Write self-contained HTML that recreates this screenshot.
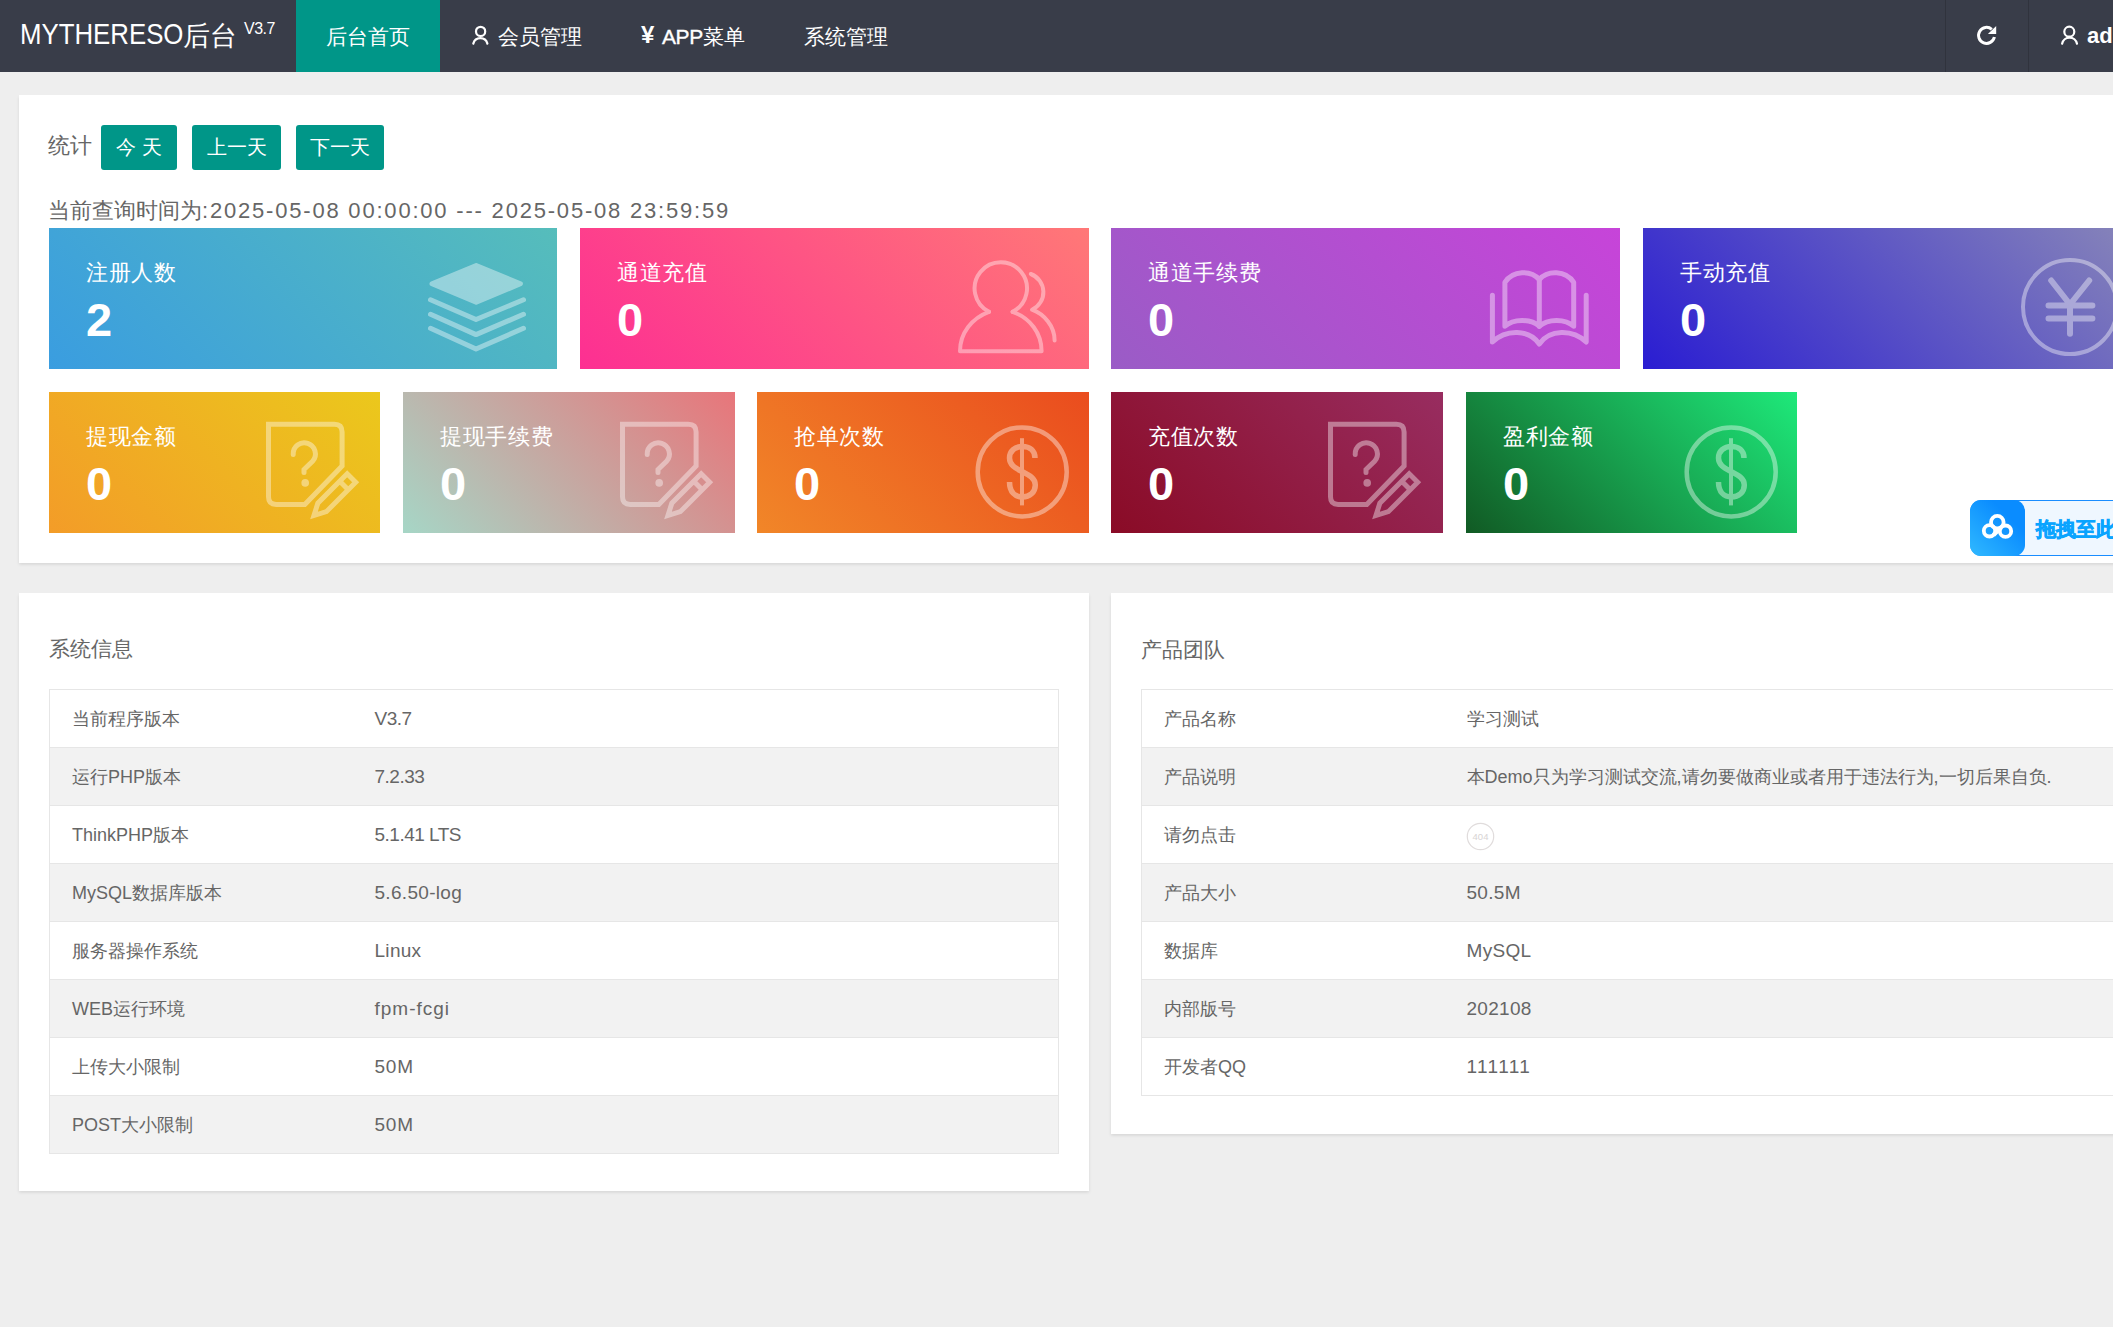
<!DOCTYPE html>
<html><head><meta charset="utf-8">
<style>
*{margin:0;padding:0;box-sizing:border-box}
html,body{width:2113px;height:1327px;overflow:hidden;background:#eeeeee;font-family:"Liberation Sans",sans-serif;color:#666}
.abs{position:absolute}
#hdr{position:absolute;left:0;top:0;width:2113px;height:72px;background:#393d49}
.nav{position:absolute;top:1px;height:72px;line-height:72px;color:#fff;font-size:21px;white-space:nowrap}
.sep{position:absolute;top:0;width:1px;height:72px;background:#30333d}
.panel{position:absolute;background:#fff;box-shadow:0 1.5px 3px rgba(0,0,0,.1)}
.btn{position:absolute;top:125px;height:45px;line-height:45px;background:#009688;color:#fff;border-radius:3px;font-size:19.5px;text-align:center;white-space:nowrap}
.card{position:absolute;color:#fff;overflow:hidden}
.card .lb{position:absolute;left:37px;top:30px;font-size:22px;letter-spacing:.7px;font-weight:500;line-height:30px;white-space:nowrap}
.card .num{position:absolute;left:37px;top:67px;font-size:47px;line-height:50px;font-weight:bold}
.card svg{position:absolute;left:0;top:0}
table{border-collapse:collapse;position:absolute;font-size:18px;color:#666}
td{height:58px;border-top:1px solid #e6e6e6;border-bottom:1px solid #e6e6e6;padding:0 0 0 22px;white-space:nowrap}
tr:nth-child(even) td{background:#f2f2f2}
.v{font-size:19px;letter-spacing:.3px;position:relative;top:0}
.vd{letter-spacing:-.5px}
</style></head><body>
<div id="hdr">
  <div class="nav" style="left:20px;font-size:30px;line-height:72px;top:-2px"><span id="lg" style="display:inline-block;transform:scaleX(.86);transform-origin:0 50%">MYTHERESO</span></div>
  <div class="nav" style="left:183px;font-size:27px;line-height:72px;top:0px">后台</div>
  <div class="nav" style="left:244px;font-size:16px;line-height:20px;top:19px;letter-spacing:-.5px">V3.7</div>
  <div class="abs" style="left:296px;top:0;width:144px;height:72px;background:#009688"></div><div class="nav" style="left:296px;width:144px;text-align:center">后台首页</div>
  <div class="nav" style="left:498px">会员管理</div>
  <svg class="abs" style="left:0;top:0" width="2113" height="72" viewBox="0 0 2113 72" fill="none" stroke="#fff" stroke-width="2.2" stroke-linecap="round">
   <circle cx="480.6" cy="31.4" r="4.6"/>
   <path d="M473.3,43.6 A7.3,7.3 0 0 1 487.4,43.6"/>
   <circle cx="2069.3" cy="31.7" r="5"/>
   <path d="M2062.1,43.7 A7.6,7.6 0 0 1 2077,43.7"/>
   <path stroke-width="3" stroke-linecap="butt" d="M1994.4,37 A8,8 0 1 1 1991.8,29.3"/>
   <path fill="#fff" stroke="none" d="M1987.9,33.9 L1996.2,25.9 L1996.2,33.9 Z"/>
  </svg>
  <div class="nav" style="left:641px;font-weight:bold;font-size:24px;top:-1px">¥</div><div class="nav" style="left:662px"><span style="letter-spacing:-.4px;-webkit-text-stroke:.35px #fff">APP</span>菜单</div>
  <div class="nav" style="left:804px">系统管理</div>
  <div class="sep" style="left:1945px"></div>
  <div class="sep" style="left:2028px"></div>
  <div class="nav" style="left:2087px;font-size:22px;font-weight:bold;top:0px">admin</div>
</div>

<div class="panel" style="left:19px;top:95px;width:2181px;height:468px">
</div>
<div class="abs" style="left:48px;top:128px;font-size:22px;line-height:36px;color:#666">统计</div>
<div class="btn" style="left:101px;width:76px">今 天</div>
<div class="btn" style="left:192px;width:89px">上一天</div>
<div class="btn" style="left:296px;width:88px">下一天</div>
<div class="abs" style="left:48px;top:196px;font-size:22px;line-height:30px;color:#666;white-space:nowrap">当前查询时间为<span style="letter-spacing:1.8px">:2025-05-08 00:00:00 --- 2025-05-08 23:59:59</span></div>

<div class="card" style="left:49px;top:228px;width:508px;height:141px;background:linear-gradient(45deg,#3a9de0,#56bdbb)"><div class="lb">注册人数</div><div class="num">2</div></div>
<div class="card" style="left:580px;top:228px;width:509px;height:141px;background:linear-gradient(45deg,#fd2f92,#ff7877)"><div class="lb">通道充值</div><div class="num">0</div></div>
<div class="card" style="left:1111px;top:228px;width:509px;height:141px;background:linear-gradient(45deg,#9a5cc6,#c744d9)"><div class="lb">通道手续费</div><div class="num">0</div></div>
<div class="card" style="left:1643px;top:228px;width:509px;height:141px;background:linear-gradient(45deg,#2a1dd2,#8a88b8)"><div class="lb">手动充值</div><div class="num">0</div></div>

<div class="card" style="left:49px;top:392px;width:331px;height:141px;background:linear-gradient(45deg,#f39c28,#ebc81c)"><div class="lb">提现金额</div><div class="num">0</div></div>
<div class="card" style="left:403px;top:392px;width:332px;height:141px;background:linear-gradient(45deg,#a6d6c6,#e8757a)"><div class="lb">提现手续费</div><div class="num">0</div></div>
<div class="card" style="left:757px;top:392px;width:332px;height:141px;background:linear-gradient(45deg,#f18628,#ea4c1e)"><div class="lb">抢单次数</div><div class="num">0</div></div>
<div class="card" style="left:1111px;top:392px;width:332px;height:141px;background:linear-gradient(45deg,#8a0b26,#982d60)"><div class="lb">充值次数</div><div class="num">0</div></div>
<div class="card" style="left:1466px;top:392px;width:331px;height:141px;background:linear-gradient(45deg,#115a24,#1ee97a)"><div class="lb">盈利金额</div><div class="num">0</div></div>


<svg class="abs" style="left:0;top:0" width="2113" height="1327" viewBox="0 0 2113 1327">
<defs>
<g id="iq" fill="none" stroke="#fff" stroke-width="5" stroke-linejoin="miter">
 <path d="M293.1,74 L293.1,40 Q293.1,32.3 285.4,32.3 L219.5,32.3 L219.5,104.7 Q219.5,112.4 227.2,112.4 L255.8,112.4 Z"/>
 <path stroke-linecap="round" d="M244.2,62.5 A11.1,11.1 0 1 1 263.8,69 L255,77.5 L255,80.5"/>
 <circle cx="256.2" cy="90.9" r="3.8" fill="#fff" stroke="none"/>
 <g transform="translate(304.2,84.3) rotate(45)">
  <path d="M-6,2.5 L6,2.5 L6,44 L0,55.5 L-6,44 Z M-6,13 L6,13"/>
 </g>
</g>
<g id="id" fill="none" stroke="#fff">
 <circle cx="265.2" cy="79.9" r="44.5" stroke-width="4.5"/>
 <path stroke-width="4" d="M265,46.2 L265,113.4"/>
 <path stroke-width="5.5" d="M278,66 C278,58.5 272.5,54.5 265.5,54.5 C258,54.5 252.5,59 252.5,66 C252.5,73 258,76 265,79.5 C272,83 278.3,86 278.3,93 C278.3,100.5 272.5,105 265.5,105 C258,105 252.5,100 252.5,90"/>
</g>
</defs>
<g opacity=".4" transform="translate(49,228)" fill="#fff" stroke="#fff" stroke-width="5" stroke-linecap="round" stroke-linejoin="round">
 <polygon points="383,55.8 427.2,37.5 471.4,55.8 427.2,74.3"/>
 <polyline fill="none" points="381.5,71.8 427,91.5 474.5,71.8"/>
 <polyline fill="none" points="381.5,86.3 427,106.6 474.5,86.3"/>
 <polyline fill="none" points="381.5,100.3 427,121 474.5,100.3"/>
</g>
<g opacity=".4" transform="translate(580,228)" fill="none" stroke="#fff" stroke-width="4" stroke-linecap="round" stroke-linejoin="round">
 <path d="M409,83.8 A26.2,26.2 0 1 1 432.6,83.8"/>
 <path d="M432.6,83.8 C450,90 461.6,105 461.6,123.2 L380,123.2 C380,105 392,90 409,83.8"/>
 <path d="M450.8,46 A19.3,19.3 0 0 1 452,81.7 C464,86 474.6,98 474.6,112.4"/>
</g>
<g opacity=".4" transform="translate(1111,228)" fill="none" stroke="#fff" stroke-width="5" stroke-linecap="round" stroke-linejoin="round">
 <path d="M428.3,98.3 L428.3,51.5 C420,42 402,42 393.9,54.3 L393.9,98.3 C402,90.5 420,90.5 428.3,98.3"/>
 <path d="M428.3,51.5 C436.6,42 454.6,42 462.7,54.3 L462.7,98.3 C454.6,90.5 436.6,90.5 428.3,98.3"/>
 <path d="M381.4,67.2 L381.4,114 C395,101 418,101 428.3,116 C438.6,101 461.6,101 475.2,114 L475.2,67.2"/>
</g>
<g opacity=".4" transform="translate(1643,228)" fill="none" stroke="#fff" stroke-linecap="round" stroke-linejoin="round">
 <circle cx="427" cy="79" r="47" stroke-width="4"/>
 <path stroke-width="6" d="M408.2,52.5 L427,76.5 L446.2,52.5 M427,76.5 L427,105.8 M405.5,77.4 L449.4,77.4 M405.5,90.4 L449.4,90.4"/>
</g>
<use href="#iq" opacity=".4" transform="translate(49,392)"/>
<use href="#iq" opacity=".4" transform="translate(403,392)"/>
<use href="#id" opacity=".4" transform="translate(757,392)"/>
<use href="#iq" opacity=".4" transform="translate(1111,392)"/>
<use href="#id" opacity=".4" transform="translate(1466,392)"/>
</svg>
<div class="panel" style="left:19px;top:593px;width:1070px;height:598px"></div>
<div class="panel" style="left:1111px;top:593px;width:1070px;height:541px"></div>
<div class="abs" style="left:49px;top:634px;font-size:21px;line-height:30px;color:#666">系统信息</div>
<div class="abs" style="left:1141px;top:635px;font-size:21px;line-height:30px;color:#666">产品团队</div>

<table style="left:49px;top:689px;width:1010px;border-left:1px solid #e6e6e6;border-right:1px solid #e6e6e6">
<tr><td style="width:303px">当前程序版本</td><td><span class="v vd">V3.7</span></td></tr>
<tr><td>运行PHP版本</td><td><span class="v vd">7.2.33</span></td></tr>
<tr><td>ThinkPHP版本</td><td><span class="v vd">5.1.41 LTS</span></td></tr>
<tr><td>MySQL数据库版本</td><td><span class="v">5.6.50-log</span></td></tr>
<tr><td>服务器操作系统</td><td><span class="v">Linux</span></td></tr>
<tr><td>WEB运行环境</td><td><span class="v" style="letter-spacing:1px">fpm-fcgi</span></td></tr>
<tr><td>上传大小限制</td><td><span class="v" style="letter-spacing:.8px">50M</span></td></tr>
<tr><td>POST大小限制</td><td><span class="v" style="letter-spacing:.8px">50M</span></td></tr>
</table>
<table style="left:1141px;top:689px;width:1010px;border-left:1px solid #e6e6e6;border-right:1px solid #e6e6e6">
<tr><td style="width:303px">产品名称</td><td>学习测试</td></tr>
<tr><td>产品说明</td><td>本Demo只为学习测试交流,请勿要做商业或者用于违法行为,一切后果自负.</td></tr>
<tr><td>请勿点击</td><td></td></tr>
<tr><td>产品大小</td><td><span class="v">50.5M</span></td></tr>
<tr><td>数据库</td><td><span class="v">MySQL</span></td></tr>
<tr><td>内部版号</td><td><span class="v">202108</span></td></tr>
<tr><td>开发者QQ</td><td><span class="v" style="letter-spacing:1.4px">111111</span></td></tr>
</table>

<div class="abs" style="left:1970px;top:500px;width:200px;height:56px;border:1.5px solid #1a8dff;border-radius:11px;background:#eff7ff"></div>
<div class="abs" style="left:1970px;top:500px;width:55px;height:56px;border-radius:11px;background:linear-gradient(225deg,#0a8cff 30%,#30b9ff)"></div>
<svg class="abs" style="left:1970px;top:500px" width="56" height="56" viewBox="0 0 56 56" fill="none" stroke="#fff" stroke-width="3.8">
 <circle cx="27.3" cy="22.2" r="6.3"/>
 <circle cx="19.5" cy="30.8" r="5.7"/>
 <circle cx="35.5" cy="31.2" r="5.7"/>
 <path d="M23.5,35 L31,27.5" stroke-width="4.5"/>
</svg>
<div class="abs" style="left:2036px;top:514px;font-size:20px;line-height:30px;font-weight:bold;color:#0aa4ff;-webkit-text-stroke:.7px #0aa4ff;white-space:nowrap">拖拽至此</div>
<svg class="abs" style="left:1466px;top:822px" width="30" height="30" viewBox="0 0 30 30">
 <circle cx="14.5" cy="14.5" r="13.2" fill="none" stroke="#e0dcdc" stroke-width="1.2"/>
 <text x="14.5" y="18" font-size="9.5" text-anchor="middle" fill="#d8d4d4" font-family="Liberation Sans">404</text>
</svg>
</body></html>
